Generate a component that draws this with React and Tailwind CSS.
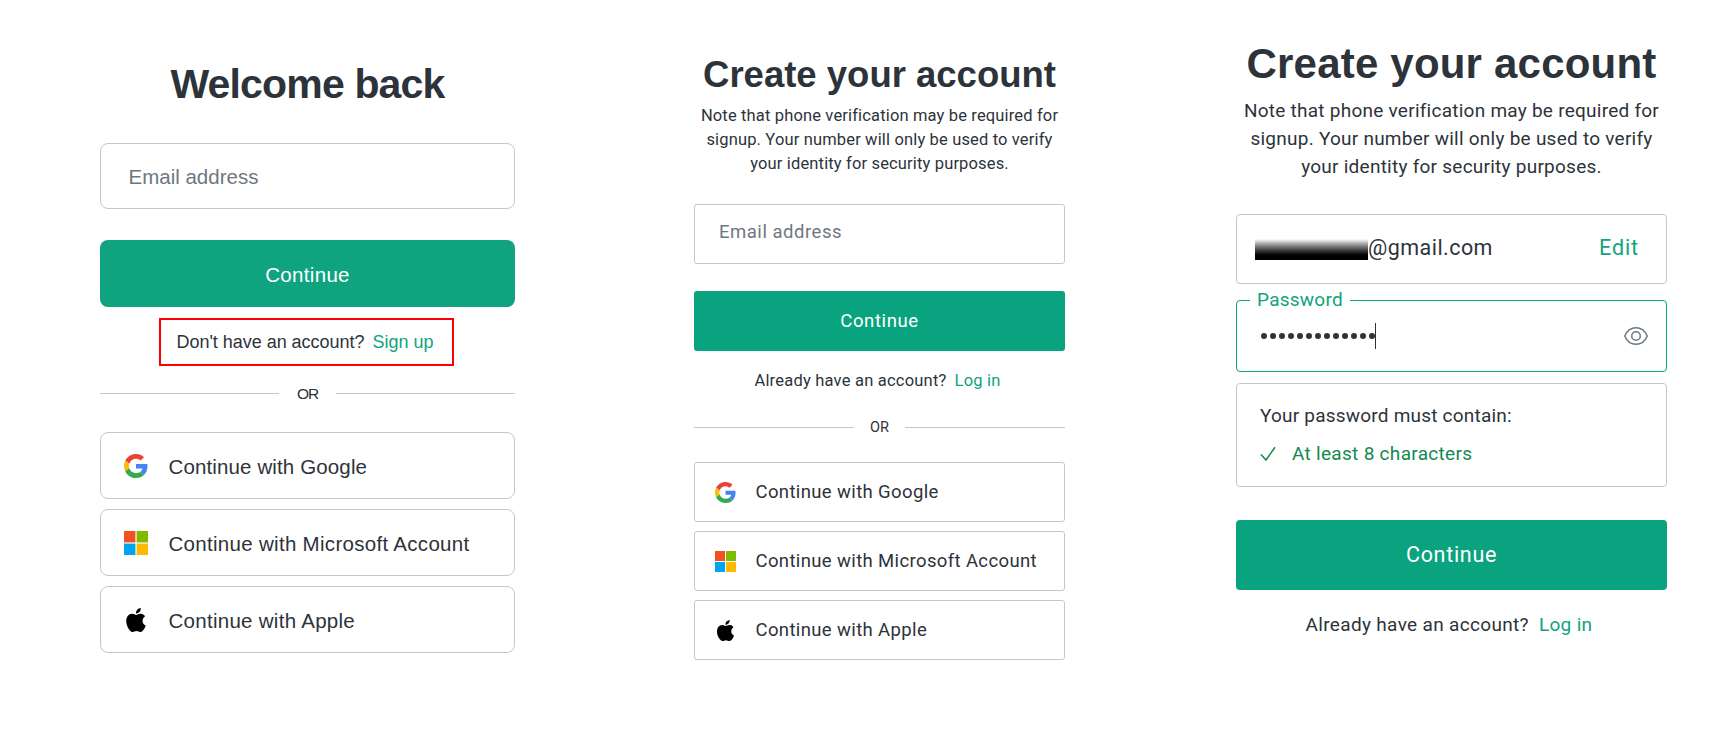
function GoogleIcon({ className }) {
  return (
    <svg viewBox="0 0 48 48" className={className}>
      <path fill="#EA4335" d="M24 9.5c3.54 0 6.71 1.22 9.21 3.6l6.85-6.85C35.9 2.38 30.47 0 24 0 14.62 0 6.51 5.38 2.56 13.22l7.98 6.19C12.43 13.72 17.74 9.5 24 9.5z" />
      <path fill="#4285F4" d="M46.98 24.55c0-1.57-.15-3.09-.38-4.55H24v9.02h12.94c-.58 2.96-2.26 5.48-4.78 7.18l7.73 6c4.51-4.18 7.09-10.36 7.09-17.65z" />
      <path fill="#FBBC05" d="M10.53 28.59c-.48-1.45-.76-2.99-.76-4.59s.27-3.14.76-4.59l-7.98-6.19C.92 16.46 0 20.12 0 24c0 3.88.92 7.54 2.56 10.78l7.97-6.19z" />
      <path fill="#34A853" d="M24 48c6.48 0 11.93-2.13 15.89-5.81l-7.73-6c-2.15 1.45-4.92 2.3-8.16 2.3-6.26 0-11.57-4.22-13.47-9.91l-7.98 6.19C6.51 42.62 14.62 48 24 48z" />
    </svg>
  );
}

function MicrosoftIcon({ className }) {
  return (
    <svg viewBox="0 0 21 21" className={className}>
      <path fill="#f25022" d="M0 0h10v10H0z" />
      <path fill="#7fba00" d="M11 0h10v10H11z" />
      <path fill="#00a4ef" d="M0 11h10v10H0z" />
      <path fill="#ffb900" d="M11 11h10v10H11z" />
    </svg>
  );
}

function AppleIcon({ className }) {
  return (
    <svg viewBox="0 0 24 24" className={className}>
      <path d="M12.152 6.896c-.948 0-2.415-1.078-3.96-1.04-2.04.027-3.91 1.183-4.961 3.014-2.117 3.675-.546 9.103 1.519 12.09 1.013 1.454 2.208 3.09 3.792 3.039 1.52-.065 2.09-.987 3.935-.987 1.831 0 2.35.987 3.96.948 1.637-.026 2.676-1.48 3.676-2.948 1.156-1.688 1.636-3.325 1.662-3.415-.039-.013-3.182-1.221-3.22-4.857-.026-3.04 2.48-4.494 2.597-4.559-1.429-2.09-3.623-2.324-4.39-2.376-2-.156-3.675 1.09-4.61 1.09zM15.53 3.83c.843-1.012 1.4-2.427 1.245-3.83-1.207.052-2.662.805-3.532 1.818-.78.896-1.454 2.338-1.273 3.714 1.338.104 2.715-.688 3.559-1.701" />
    </svg>
  );
}

function EyeIcon() {
  return (
    <svg viewBox="0 0 24 20" className="h-5 w-6" fill="none" stroke="#6e7780" strokeWidth="1.5">
      <path d="M.8 10C3 4.600 7.200 1.700 12 1.700S21 4.600 23.200 10C21 15.400 16.800 18.300 12 18.300S3 15.400.8 10Z" strokeLinejoin="round" />
      <circle cx="12" cy="10" r="4.300" />
    </svg>
  );
}

function LoginPanel() {
  const providers = [
    [GoogleIcon, "Continue with Google", "tracking-[0.13px]"],
    [MicrosoftIcon, "Continue with Microsoft Account", "tracking-[0.3px]"],
    [AppleIcon, "Continue with Apple", "tracking-[0.28px]"],
  ];
  return (
    <section className="flex w-[415px] flex-col pt-[59px] font-['Liberation_Sans',sans-serif]">
      <h1 className="text-center text-[41px] leading-[50px] font-bold tracking-[-0.84px]">Welcome back</h1>
      <div className="mt-[34px] flex h-[66px] items-center rounded-[8px] border border-[#c2c8d0] pt-[3px] pl-[27.500px] text-[20.5px] text-[#6e7780]">
        Email address
      </div>
      <button className="mt-[31px] h-[67px] rounded-[8px] bg-[#10a37f] pt-[3px] text-[20.5px] tracking-[0.33px] text-white">Continue</button>
      <div className="mt-[11px] ml-[58.500px] flex h-[48px] w-[295px] items-center justify-center gap-[8px] border-2 border-[#ff0000] pr-[2px] text-[18px] whitespace-nowrap">
        <span className="tracking-[-0.03px]">Don't have an account?</span>
        <a className="text-[#10a37f]">Sign up</a>
      </div>
      <div className="mt-[17px] flex h-5 items-center">
        <span className="h-px w-[179px] bg-[#c2c8d0]" />
        <span className="flex-1 pt-[2px] text-center text-[15.5px] tracking-[-1px]">OR</span>
        <span className="h-px w-[179px] bg-[#c2c8d0]" />
      </div>
      <div className="mt-[29px] flex flex-col gap-[10px]">
        {providers.map(([Icon, label, tracking]) => (
          <button key={label} className="flex h-[67px] items-center rounded-[8px] border border-[#c2c8d0] pl-[22.500px]">
            <Icon className="size-6" />
            <span className={`ml-[21px] pt-[3px] text-[20.5px] whitespace-nowrap ${tracking}`}>{label}</span>
          </button>
        ))}
      </div>
    </section>
  );
}

function SignupPanel() {
  const providers = [
    [GoogleIcon, "Continue with Google"],
    [MicrosoftIcon, "Continue with Microsoft Account"],
    [AppleIcon, "Continue with Apple"],
  ];
  return (
    <section className="ml-[179px] flex w-[371px] flex-col pt-[50px]">
      <h1 className="text-center font-['Liberation_Sans',sans-serif] text-[36.500px] leading-[50px] font-bold">Create your account</h1>
      <p className="mt-[4px] text-center text-[16.5px] leading-[24px] tracking-[0.15px] whitespace-nowrap">
        Note that phone verification may be required for
        <br />
        signup. Your number will only be used to verify
        <br />
        your identity for security purposes.
      </p>
      <div className="mt-[28px] flex h-[60px] items-center rounded-[3px] border border-[#c2c8d0] pb-[2px] pl-[24px] text-[18.5px] tracking-[0.52px] text-[#6e7780]">
        Email address
      </div>
      <button className="mt-[27px] h-[60px] rounded-[3px] bg-[#0aa37f] pt-[1px] text-[18.5px] tracking-[0.6px] text-white">Continue</button>
      <div className="mt-[18px] mr-[4px] flex h-6 items-center justify-center gap-[8px] text-[16.5px] tracking-[0.21px] whitespace-nowrap">
        <span>Already have an account?</span>
        <a className="text-[#10a37f]">Log in</a>
      </div>
      <div className="mt-[24px] flex h-5 items-center">
        <span className="h-px w-[160px] bg-[#c2c8d0]" />
        <span className="flex-1 pt-[1px] text-center text-[14.5px]">OR</span>
        <span className="h-px w-[160px] bg-[#c2c8d0]" />
      </div>
      <div className="mt-[25px] flex flex-col gap-[9px]">
        {providers.map(([Icon, label]) => (
          <button key={label} className="flex h-[60px] items-center rounded-[3px] border border-[#c2c8d0] pl-[20px]">
            <Icon className="size-[21px]" />
            <span className="ml-[19.500px] pt-[1px] text-[18.5px] tracking-[0.37px] whitespace-nowrap">{label}</span>
          </button>
        ))}
      </div>
    </section>
  );
}

function PasswordPanel() {
  return (
    <section className="ml-[171px] flex w-[431px] flex-col pt-[39px]">
      <h1 className="text-center font-['Liberation_Sans',sans-serif] text-[42px] leading-[50px] font-bold tracking-[0.2px]">Create your account</h1>
      <p className="mt-[8px] text-center text-[19px] leading-[28px] tracking-[0.25px] whitespace-nowrap">
        Note that phone verification may be required for
        <br />
        signup. Your number will only be used to verify
        <br />
        your identity for security purposes.
      </p>
      <div className="mt-[33px] flex h-[70px] items-center rounded-[4px] border border-[#c2c8d0] pr-[27px] pl-[18px] text-[21.5px]">
        <span className="h-[21px] w-[113px] bg-linear-to-b from-white to-black to-85%" />
        <span className="flex-1 pb-[2px] tracking-[0.45px]">@gmail.com</span>
        <a className="pb-[2px] tracking-[0.88px] text-[#10a37f]">Edit</a>
      </div>
      <div className="relative mt-[16px] flex h-[72px] items-center rounded-[4px] border border-[#10a37f] pr-[18px] pl-[24px]">
        <span className="absolute -top-[13px] left-[13px] bg-white pr-[7px] pl-[7px] text-[19px] leading-6 tracking-[0.25px] text-[#10a37f]">Password</span>
        <div className="flex flex-1 items-center">
          <div className="flex gap-[3.100px]">
            {Array.from({ length: 13 }, (_, i) => (
              <span key={i} className="size-[5.900px] rounded-full bg-[#2d333a]" />
            ))}
          </div>
          <span className="h-[26px] w-px bg-[#2d333a]" />
        </div>
        <EyeIcon />
      </div>
      <div className="mt-[11px] flex h-[104px] flex-col rounded-[4px] border border-[#c2c8d0] pt-[19px] pl-[23px] text-[19px] whitespace-nowrap">
        <span className="leading-[26px] tracking-[0.21px]">Your password must contain:</span>
        <div className="mt-[12px] flex items-center text-[#128a4e]">
          <svg viewBox="0 0 16 16" className="size-4" fill="none" stroke="currentColor" strokeWidth="1.500">
            <path d="M1 8.500 6 14 15 1.200" />
          </svg>
          <span className="ml-[16px] leading-[26px] tracking-[0.3px]">At least 8 characters</span>
        </div>
      </div>
      <button className="mt-[33px] h-[70px] rounded-[4px] bg-[#0aa37f] text-[21.5px] tracking-[0.7px] text-white">Continue</button>
      <div className="mt-[23px] mr-[5px] flex h-6 items-center justify-center gap-[10px] text-[19px] tracking-[0.33px] whitespace-nowrap">
        <span>Already have an account?</span>
        <a className="text-[#10a37f]">Log in</a>
      </div>
    </section>
  );
}

export default function App() {
  return (
    <main className="flex h-[730px] w-[1724px] items-start overflow-hidden bg-white pl-[100px] font-['Roboto',sans-serif] text-[#2d333a]">
      <LoginPanel />
      <SignupPanel />
      <PasswordPanel />
    </main>
  );
}
